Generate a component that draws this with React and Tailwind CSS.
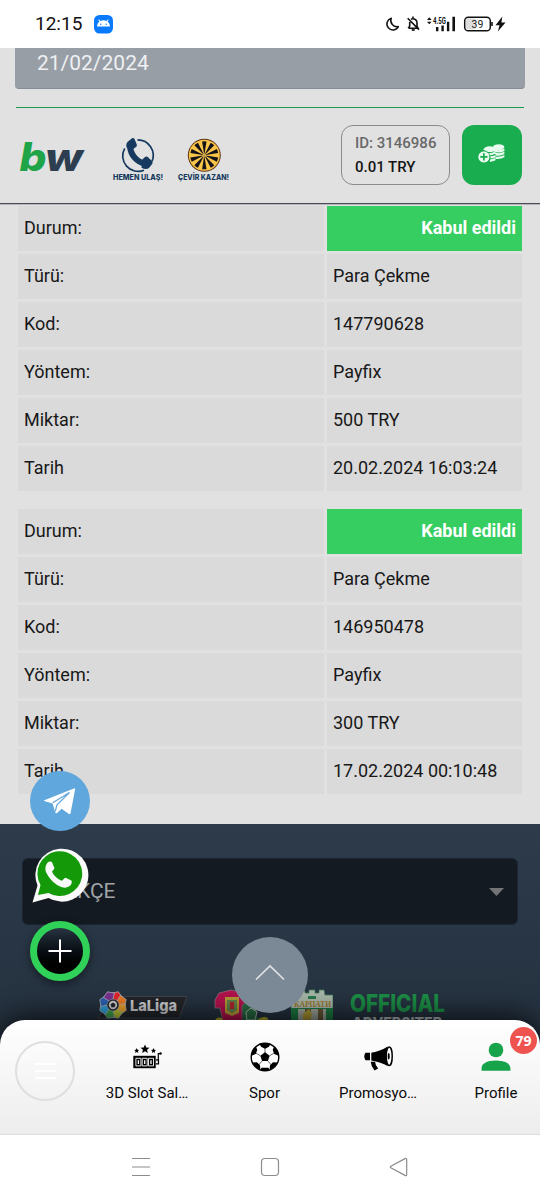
import React from 'react';

const transactions = [
    { code: '147790628', type: 'Para Çekme', method: 'Payfix', amount: '500 TRY', date: '20.02.2024 16:03:24' },
    { code: '146950478', type: 'Para Çekme', method: 'Payfix', amount: '300 TRY', date: '17.02.2024 00:10:48' },
];

const StatusBar = () => (
    <div className="h-12 shrink-0 bg-white flex items-center justify-between pl-[35px] pr-[34px]">
        <div className="flex items-center">
            <span className="-mt-0.5 text-[19px] leading-none text-[#111] w-[59px]">12:15</span>
            <svg width="19" height="19" viewBox="0 0 19 19">
                <rect width="19" height="18.5" rx="5.5" fill="#0a7aff" />
                <path d="M3 11.5a6.5 6.3 0 0 1 13 0z" fill="#fff" />
                <path d="M5 5l1.4 2.2M14 5l-1.4 2.2" stroke="#fff" strokeWidth="1.1" strokeLinecap="round" />
                <circle cx="6.8" cy="9.3" r=".7" fill="#0a7aff" />
                <circle cx="12.2" cy="9.3" r=".7" fill="#0a7aff" />
            </svg>
        </div>
        <svg width="121" height="18" viewBox="385 15 121 18" fill="none">
            <path d="M391.2 18.2a6 6 0 1 0 7.1 8.4a6.3 6.3 0 0 1-7.1-8.4z" stroke="#111" strokeWidth="1.5" strokeLinejoin="round" />
            <path d="M409 28.2h9l-1-2v-3.7a4 4 0 0 0-6-3.2M409.7 22v4.2l-1.5 2M413 16.5v1.5M407.7 18.2l11.3 11.4" stroke="#111" strokeWidth="1.6" />
            <path d="M411.7 30h3" stroke="#111" strokeWidth="1.7" />
            <path d="M427 20l2.3-2.7 2.3 2.7zM427 21.7l2.3 2.6 2.3-2.6z" fill="#111" />
            <text x="433" y="24.2" fontSize="8.2" fontWeight="700" fill="#111" textLength="13" lengthAdjust="spacingAndGlyphs">4.5G</text>
            <path d="M436 27v4.300h2.400V27zM441.400 25.500v5.800h2.400v-5.800zM446.900 21.700v9.600h2.400v-9.600zM452.400 16.700v14.600h2.600V16.700z" fill="#111" />
            <rect x="464.7" y="17.2" width="25.6" height="13.6" rx="3.6" fill="#fff" stroke="#111" strokeWidth="1.5" />
            <rect x="466" y="18.5" width="10" height="11" rx="2" fill="#ddd" />
            <path d="M492 22v4" stroke="#111" strokeWidth="1.6" />
            <text x="477.4" y="27.7" fontSize="10.5" fill="#222" textAnchor="middle">39</text>
            <path d="M502.300 16.500l-6.800 8.700h4l-1.600 6.300 7.600-9.100h-4.100z" fill="#111" />
        </svg>
    </div>
);

const BwLogo = () => (
    <svg width="74" height="56" viewBox="14 128 74 56" fontFamily="Inter, sans-serif" fontWeight="800" fontStyle="italic" fontSize="39">
        <text x="19.5" y="171" fill="#1fa548" textLength="27" lengthAdjust="spacingAndGlyphs">b</text>
        <text x="45" y="171" fill="#2c3e50" textLength="38" lengthAdjust="spacingAndGlyphs">w</text>
    </svg>
);

const PhoneBadge = () => (
    <svg width="52" height="46" viewBox="112 137 52 46">
        <path d="M137.500 139.900a15.500 15.500 0 0 1 14.500 21.500M144 170.300a15.500 15.500 0 0 1-19.300-22" fill="none" stroke="#163a5f" strokeWidth="1.700" />
        <path d="M130 146c.5 9 7 16.500 16 18" fill="none" stroke="#163a5f" strokeWidth="6" />
        <path d="M127.500 142l4.500-3.800q1.600-.8 2.500.8l2.300 5.500q.5 1.500-.8 2.500l-3.500 2.500-5.700-1.500q-1.300-3.500.7-6zM142.300 159.500l2.700-2.500q1.500-1 2.800 0l4.300 4.200q1 1.200.2 2.500l-3.300 4.300q-3 2-7.500-.3z" fill="#163a5f" />
        <text x="113" y="180" fontSize="7" fontWeight="800" fontFamily="Inter, sans-serif" fill="#163a5f" textLength="50" lengthAdjust="spacingAndGlyphs">HEMEN ULAŞ!</text>
    </svg>
);

const WheelBadge = () => {
    const slices = Array.from({ length: 10 }, (_, i) => i * 36);
    return (
        <svg width="53" height="46" viewBox="177 137 53 46">
            <circle cx="204.300" cy="155.300" r="16.500" fill="#5b3413" />
            <circle cx="204.300" cy="155.300" r="15.500" fill="#f9c548" />
            {slices.map(a => (
                <path key={a} d="M204.300 155.300L202.100 141.400a14.500 14.500 0 0 1 4.400 0z" fill="#15131a" transform={`rotate(${a} 204.300 155.300)`} />
            ))}
            <circle cx="204.300" cy="155.300" r="2" fill="#c9a04a" />
            <text x="178" y="180" fontSize="7" fontWeight="800" fontFamily="Inter, sans-serif" fill="#163a5f" textLength="51" lengthAdjust="spacingAndGlyphs">ÇEVİR KAZAN!</text>
        </svg>
    );
};

const CoinsIcon = () => (
    <svg className="-mt-[3px] mr-0.5" width="29" height="21" viewBox="0 0 30 22">
        <g fill="#e9fbef">
            <ellipse cx="22.500" cy="4.300" rx="6" ry="3" />
            <path d="M16.500 5.800q6 3.800 12 0v2.500q-6 3.400-12 0zM18.500 10.200q6 1.300 10-1v2.400q-4 2.400-9 1.600zM19 14.300q6 .600 9.500-1.800v2.400q-4 2.400-9 1.800z" />
            <ellipse cx="13" cy="6.500" rx="6.200" ry="3" />
            <path d="M10 10.600q5 .6 9.200-1.800v2.300q-2.600 1.800-6 2zM13.500 14q3.500 0 5.700-1.500v2.300q-2.200 1.500-5.200 1.500zM13.500 17.300q3.300 0 5.700-1.500v2.300q-2.600 1.600-6.200 1.500z" />
            <circle cx="7" cy="14.600" r="6" />
        </g>
        <circle cx="7" cy="14.600" r="6.500" fill="none" stroke="#1aad50" strokeWidth=".8" />
        <path d="M7 10.800v7.600M3.200 14.600h7.600" stroke="#1aad50" strokeWidth="1.800" />
    </svg>
);

const Header = () => (
    <div className="h-24 shrink-0 border-b border-[#4c4a57] shadow-[0_1px_0_#b5b4ba] flex items-center pl-[14px] pr-[18px]">
        <BwLogo />
        <div className="flex gap-[13px] ml-6 mt-2">
            <PhoneBadge />
            <WheelBadge />
        </div>
        <div className="ml-auto -mt-px flex items-center gap-3">
            <div className="w-[109px] h-[60px] border-[1.5px] border-[#8b8a8f] rounded-xl pl-[13px] flex flex-col justify-center text-[15px] leading-6 font-medium whitespace-nowrap">
                <span className="text-[#68686a]">ID: 3146986</span>
                <span className="text-[#151515]">0.01 TRY</span>
            </div>
            <div className="w-[60px] h-[60px] rounded-xl bg-[#1aad50] flex items-center justify-center">
                <CoinsIcon />
            </div>
        </div>
    </div>
);

const Row = ({ label, value, status }) => (
    <div className="grid grid-cols-[306px_195px] gap-[3px] h-[45px]">
        <div className="bg-[#dadada] flex items-center pl-1.5 pb-0.5">{label}</div>
        {status ? (
            <div className="bg-[#36cd61] text-white font-bold flex items-center justify-end pr-1.5 pb-0.5">{value}</div>
        ) : (
            <div className="bg-[#dadada] flex items-center pl-1.5 pb-0.5">{value}</div>
        )}
    </div>
);

const Transaction = ({ item }) => (
    <div className="flex flex-col gap-[3px] text-lg text-[#181818]">
        <Row label="Durum:" value="Kabul edildi" status />
        <Row label="Türü:" value={item.type} />
        <Row label="Kod:" value={item.code} />
        <Row label="Yöntem:" value={item.method} />
        <Row label="Miktar:" value={item.amount} />
        <Row label="Tarih" value={item.date} />
    </div>
);

const LaLigaLogo = () => {
    const petals = ['#e5252c', '#ef7d22', '#f0a52b', '#b9c733', '#3fa34d', '#2fa0dc', '#2b62b4', '#7b3290'];
    return (
        <svg width="90" height="34" viewBox="97 988 90 34">
            <path d="M112 996.500h75l-8 21.500H98z" fill="#22252a" stroke="#4a4b50" strokeWidth=".8" />
            <circle cx="113" cy="1005" r="12" fill="#aeb4bb" />
            {petals.map((c, i) => (
                <path key={c} d="M110.700 999.400l-3.600-4.900 5.900-3.800 5.900 3.800-3.600 4.900z" fill={c} stroke="#aeb4bb" strokeWidth=".7" transform={`rotate(${i * 45 + 22} 113 1005)`} />
            ))}
            <circle cx="113" cy="1005" r="5.800" fill="#25272b" />
            <circle cx="113" cy="1005" r="4.200" fill="#d0d0d0" />
            <path d="M113 1002.500l2.500 1.800-1 3h-3l-1-3z" fill="#25272b" />
            <text x="130" y="1011" fontSize="15" fontWeight="800" fontFamily="Inter, sans-serif" fill="#cfd0d2" textLength="47" lengthAdjust="spacingAndGlyphs">LaLiga</text>
        </svg>
    );
};

const ClubCrests = () => (
    <svg width="121" height="34" viewBox="212 988 121 34">
        <path d="M240 998l9-6 7 7v18l10 3v2h-22z" fill="#286c43" />
        <path d="M246 1012l5-4 6 4-2 8h-8z" fill="none" stroke="#a7bdac" />
        <path d="M215 1000l4-7 12-3 12 3 4 7-5 6v16h-19l-3-14-5 0z" fill="#b5124d" stroke="#8d7180" strokeWidth=".8" />
        <path d="M225 997h14v16l-7 3-7-3z" fill="#b59b37" />
        <path d="M227 1000h10v10l-5 3-5-3z" fill="#62814b" />
        <path d="M230 1002h4v7h-4z" fill="#b3262f" />
        <path d="M214 1022q3-7 9-3v3zM256 1022q5-7 12-4v4z" fill="#b2a929" />
        <path d="M291 995h8l1-4h5v2h4v-3h6v3h4v-3h5l1 5h8v14h-42z" fill="#a9b8aa" stroke="#3f7b59" strokeWidth=".8" />
        <path d="M291 1008h42v14h-42z" fill="#1d7b44" />
        <path d="M298 1009h28v13h-28z" fill="#9fa79e" />
        <path d="M305 1009h6v13h-6zM318 1009h5v13h-5z" fill="#665834" />
        <path d="M303 1014l6-5 3 5-2 8h-7z" fill="#ae9a31" />
        <path d="M308 996h8v3h-8z" fill="#2b7a4c" />
        <text x="294" y="1007" fontSize="8" fontWeight="700" fontFamily="Liberation Serif, serif" fill="#9e782e" textLength="37" lengthAdjust="spacingAndGlyphs">КАРПАТИ</text>
    </svg>
);

const Footer = () => (
    <div className="relative h-[196px] shrink-0 mt-[30px] bg-linear-to-b from-[#2d3b4b] to-[#253240] overflow-hidden">
        <div className="mx-[22px] mt-[34px] h-[67px] rounded-md bg-[#141a21] border border-[#1b2631] flex items-center justify-between pl-[15px] pr-[13px]">
            <span className="text-[21px] text-[#a2a5a8]">TÜRKÇE</span>
            <svg width="15" height="8" viewBox="0 0 15 8"><path d="M0 0h15L7.500 8z" fill="#737475" /></svg>
        </div>
        <div className="mt-[63px] ml-[97px] flex">
            <LaLigaLogo />
            <div className="ml-[25px]"><ClubCrests /></div>
            <svg className="ml-[15px] overflow-visible" width="100" height="34" viewBox="348 988 100 34" fontFamily="Inter, sans-serif">
                <text x="350" y="1012" fontSize="24" fontWeight="800" fill="#1c8f46" textLength="95" lengthAdjust="spacingAndGlyphs">OFFICIAL</text>
                <text x="352" y="1028" fontSize="15" fontWeight="800" fill="#b5babf" textLength="90" lengthAdjust="spacingAndGlyphs">ADVERSITER</text>
            </svg>
        </div>
    </div>
);

const FloatingContacts = () => (
    <div className="absolute left-[30px] top-[771px] flex flex-col gap-[15px]">
        <div className="w-[60px] h-[60px] rounded-full bg-[#60a7dd]">
            <svg width="60" height="60" viewBox="0 0 60 60">
                <path d="M14.300 29.300L44.500 17.200q.8 0 .6 1L40.600 42q-.5 1.800-2 .8l-7-5.100-4.500 4.200q-1.700 1-2-1l-2.500-8.500-7.700-2.200q-1.500-.5-.6-.9z" fill="#fff" />
                <path d="M22.700 31.800L39.500 21.500 26.800 34l-1.500 6.500" fill="none" stroke="#60a7dd" strokeWidth="1.200" />
            </svg>
        </div>
        <svg width="60" height="60" viewBox="2.500 1 60 60">
            <path d="M5 57.500l5-17A26.500 26.500 0 1 1 21 53z" fill="#fafafa" />
            <path d="M10.500 50l2.500-10A22.400 22.400 0 1 1 21 48z" fill="#149a09" />
            <path d="M20.200 17.500c1.300-1.400 3.700-1.500 4.300-.2l2.300 5.500c.5 1.500-2.500 3.400-2.200 4.200 2 4.200 5.500 7.200 9.500 8.700 1 .3 2.700-3.400 4-3l5.700 2.700c1 .6.500 3.300-.8 4.800-2.200 2.300-5.500 3-8.500 2.100C28 40 21.500 34 18.500 27c-1.300-3.500-.3-7.300 1.700-9.500z" fill="#fafafa" />
        </svg>
        <div className="w-[60px] h-[60px] rounded-full border-[7.5px] border-[#30d158] bg-linear-to-b from-[#283542] to-black shadow-[0_3px_10px_rgba(0,0,0,0.45)] flex items-center justify-center">
            <svg className="shrink-0" width="24" height="24" viewBox="0 0 24 24"><path d="M12 .5v23M.5 12h23" stroke="#fff" strokeWidth="2" /></svg>
        </div>
    </div>
);

const SlotIcon = () => (
    <svg width="30" height="30" viewBox="0 0 30 30">
        <path d="M13 2.500l1.300 2.900 3.200.3-2.400 2.100.7 3.100-2.800-1.600-2.800 1.600.7-3.100-2.400-2.100 3.200-.3zM4.700 6l.8 1.700 1.800.2-1.400 1.200.4 1.800-1.600-.9-1.600.9.4-1.800-1.400-1.200 1.800-.2zM21.500 6l.8 1.700 1.800.2-1.400 1.200.4 1.800-1.600-.9-1.600.9.400-1.800-1.400-1.200 1.800-.2z" />
        <path d="M1.300 13.800h22.400v12.400H1.300z" />
        <path d="M3.900 16.300h5v7.600h-5zM10.200 16.300h5v7.600h-5zM16.500 16.300h5v7.600h-5z" fill="none" stroke="#fff" strokeWidth=".9" />
        <path d="M6.400 18.200v3.700M12.700 18.200v3.700M19 18.200v3.700" fill="none" stroke="#fff" strokeWidth="1.300" />
        <path d="M24 17.800h2.500v4H24M26.300 20v-8.300h2" fill="none" stroke="#000" strokeWidth="1.200" />
        <circle cx="28.600" cy="11.500" r="1.200" />
    </svg>
);

const BallIcon = () => (
    <svg width="30" height="30" viewBox="0 0 30 30">
        <circle cx="15" cy="15" r="13.800" fill="#fff" stroke="#000" strokeWidth="1.400" />
        <path d="M15 10.300l4.700 3.400-1.800 5.300h-5.800l-1.800-5.300zM9.500 1.800q5.500-1.700 11 0L19 4.700 15 6.700l-4-2zM1 14Q1.700 7.800 6 4.500l1.300 3.600L5.700 12zM29 14Q28.300 7.800 24 4.500l-1.300 3.600 1.600 3.900zM2.700 20.500L7 20.300l3 3 .4 4.500Q5 25.800 2.700 20.500zM27.300 20.500L23 20.300l-3 3-.4 4.500Q25 25.800 27.300 20.500z" />
        <path d="M15 5v6M10.300 13.700L5 10.500M19.700 13.700L25 10.500M12.100 19l-3.500 4M17.900 19l3.500 4" fill="none" stroke="#000" strokeWidth=".6" />
        <path d="M11.500 25.800h7l1 2.100q-4.500 1.900-9 0z" />
    </svg>
);

const MegaphoneIcon = () => (
    <svg width="30" height="30" viewBox="0 0 30 30">
        <path d="M2.500 10.800H7v7.500H2.500Q0 14.500 2.500 10.800zM8.300 10.700Q18 9 24.700 4.500q-3.700 9.500 0 19.500Q18 20 8.300 18.400z" />
        <ellipse cx="26.200" cy="14.200" rx="3" ry="9.300" fill="#fff" stroke="#000" strokeWidth="1.500" />
        <ellipse cx="25.700" cy="14.200" rx="1" ry="3.300" />
        <path d="M7.700 19.800h4.400q0 3.200 3 6.700l-3.600 1.900q-3.400-3.800-3.800-8.600z" />
    </svg>
);

const ProfileIcon = () => (
    <svg width="30" height="30" viewBox="0 0 30 30" fill="#17a34a">
        <circle cx="15" cy="8" r="7.300" />
        <path d="M.6 28.800v-3q1-7 14.400-7.200 13.400.2 14.400 7.200v3z" />
    </svg>
);

const NavItem = ({ icon, label, className }) => (
    <div className={`shrink-0 flex flex-col items-center ${className}`}>
        {icon}
        <span className="mt-[10px] text-[15px] leading-[22px] text-[#0b0b0b] whitespace-nowrap">{label}</span>
    </div>
);

const BottomNav = () => (
    <div className="h-[115px] shrink-0 bg-[#253240]">
        <div className="relative h-full rounded-t-[25px] bg-linear-to-b from-white to-[#ededed] border-b border-[#dedede] shadow-[0_-2px_30px_rgba(0,0,0,0.85)] flex items-start pt-[22px]">
            <div className="ml-[15px] -mt-px w-[60px] h-[60px] shrink-0 rounded-full border-[2.5px] border-[#dfdfdf] flex flex-col items-center justify-center gap-[5px]">
                <span className="w-[21px] h-0.5 bg-white" />
                <span className="w-[21px] h-0.5 bg-white" />
                <span className="w-[21px] h-0.5 bg-white" />
            </div>
            <NavItem icon={<SlotIcon />} label="3D Slot Sal…" className="ml-[14px] w-[116px]" />
            <NavItem icon={<BallIcon />} label="Spor" className="w-[119px]" />
            <NavItem icon={<MegaphoneIcon />} label="Promosyo…" className="w-[108px]" />
            <NavItem icon={<ProfileIcon />} label="Profile" className="ml-[22px] w-[84px]" />
            <span className="absolute left-[510px] top-[7px] w-[27px] h-[27px] rounded-full bg-[#ef5350] text-white text-[14px] font-bold flex items-center justify-center font-['Open_Sans',sans-serif]">79</span>
        </div>
    </div>
);

const SystemNav = () => (
    <div className="relative h-[65px] shrink-0 bg-white flex items-center px-[131px] pb-0.5 justify-between text-[#8c8c8c]">
        <svg width="20" height="20" viewBox="0 0 20 20"><path d="M1 1.500h18M1 10h18M1 18.500h18" stroke="currentColor" strokeWidth="1.200" /></svg>
        <svg width="20" height="20" viewBox="0 0 20 20"><rect x="1.500" y="1.500" width="17" height="17" rx="3.500" fill="none" stroke="currentColor" strokeWidth="1.200" /></svg>
        <svg width="20" height="20" viewBox="0 0 20 20"><path d="M1.800 9.300L16 1.600q1.700-.6 1.700 1V17.400q0 1.600-1.700 1L1.800 10.700q-1-.7 0-1.400z" fill="none" stroke="currentColor" strokeWidth="1.200" /></svg>
    </div>
);

const App = () => {
    return (
        <div className="relative w-[540px] h-[1200px] overflow-hidden bg-[#e1e1e1] flex flex-col font-[Roboto,sans-serif]">
            <StatusBar />
            <div className="mx-[15px] h-[41px] shrink-0 rounded-b-[4px] bg-[#989ea6] border-b border-[#878d94] pl-[22px] text-[21px] leading-[30px] text-[#eef0f2]">
                21/02/2024
            </div>
            <div className="mx-4 mt-[18px] h-px shrink-0 bg-[#1c9a4d]" />
            <Header />

            <div className="mt-0.5 px-[18px] flex flex-col gap-[18px] shrink-0">
                {transactions.map(item => <Transaction key={item.code} item={item} />)}
            </div>

            <Footer />
            <BottomNav />
            <SystemNav />

            <FloatingContacts />
            <div className="absolute left-[232px] top-[937px] w-[76px] h-[76px] rounded-full bg-[#7b8896] flex items-center justify-center">
                <svg className="-mt-1.5" width="30" height="17" viewBox="0 0 30 17"><path d="M1 15.500L15 2l14 13.500" fill="none" stroke="#dfe3e6" strokeWidth="1.700" /></svg>
            </div>
        </div>
    );
};

export default App;
